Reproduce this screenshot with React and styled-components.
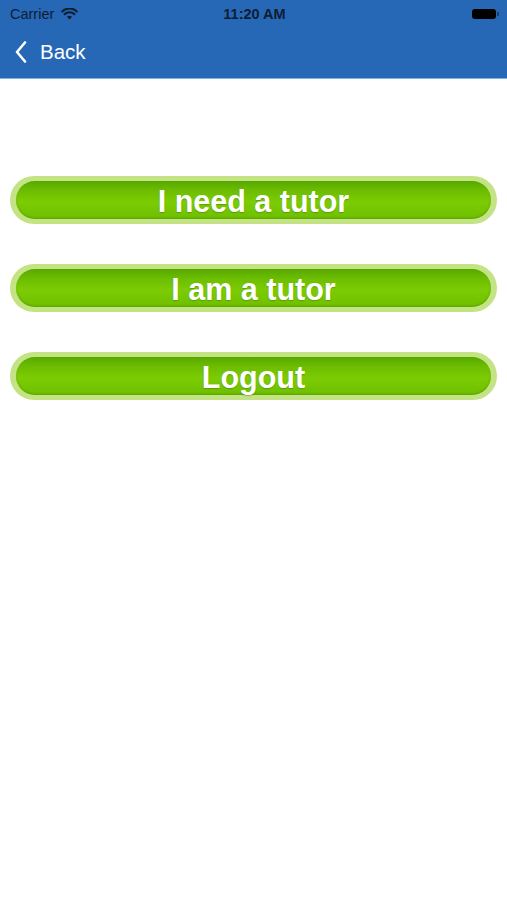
import styled, { createGlobalStyle } from "styled-components";

const GlobalStyle = createGlobalStyle`
  body {
    margin: 0;
    background: #ffffff;
    font-family: "Liberation Sans", Arial, sans-serif;
  }
`;

const Screen = styled.div`
  width: 507px;
  min-height: 900px;
  background: #ffffff;
`;

const Header = styled.header`
  background: #2667b6;
  height: 78px;
  border-bottom: 1px solid #7fb2e6;
  color: #ffffff;
  display: flex;
  flex-direction: column;
`;

const StatusBar = styled.div`
  height: 28px;
  display: grid;
  grid-template-columns: 1fr auto 1fr;
  align-items: center;
  padding: 0 8px 0 10px;
  font-size: 14.5px;
  color: #0f1d33;
`;

const Carrier = styled.div`
  display: flex;
  align-items: center;
  gap: 7px;
`;

const Time = styled.div`
  font-weight: bold;
  font-size: 14.5px;
`;

const Battery = styled.div`
  justify-self: end;
  display: flex;
  align-items: center;
  gap: 1px;
`;

const BatteryBody = styled.div`
  width: 24px;
  height: 10px;
  background: #000000;
  border-radius: 3px;
`;

const BatteryNub = styled.div`
  width: 2px;
  height: 4px;
  background: #1a3d6b;
  border-radius: 0 1px 1px 0;
`;

const NavBar = styled.div`
  flex: 1;
  display: flex;
  align-items: center;
  padding: 0 0 2px 15px;
`;

const BackButton = styled.button`
  display: flex;
  align-items: center;
  gap: 13px;
  background: none;
  border: none;
  padding: 0;
  color: #ffffff;
  font-family: "Liberation Sans", Arial, sans-serif;
  font-size: 20.5px;
`;

const Menu = styled.main`
  display: flex;
  flex-direction: column;
  gap: 40px;
  padding: 97px 10px 0 10px;
`;

const PillButton = styled.button`
  height: 48px;
  width: 100%;
  padding: 5px 6px;
  border: none;
  border-radius: 24px;
  background: #c3e385;
  cursor: pointer;
  display: flex;
`;

const PillInner = styled.span`
  flex: 1;
  border-radius: 19px;
  background: linear-gradient(
    to bottom,
    #58a800 0%,
    #6cbd00 25%,
    #7ccb04 55%,
    #6ebf00 100%
  );
  box-shadow: inset 0 -1px 2px rgba(60, 120, 0, 0.4);
  display: flex;
  align-items: center;
  justify-content: center;
  padding-top: 2px;
  color: #ffffff;
  font-family: "Liberation Sans", Arial, sans-serif;
  font-weight: bold;
  font-size: 30.5px;
  text-shadow: 0 1px 1px rgba(40, 90, 0, 0.35);
`;

const items = ["I need a tutor", "I am a tutor", "Logout"];

const App = () => {
  return (
    <Screen>
      <GlobalStyle />
      <Header>
        <StatusBar>
          <Carrier>
            Carrier
            <svg width="17" height="12" viewBox="0 0 18 13">
              <path d="M9 12.5 L6.3 9.5 A4 4 0 0 1 11.7 9.5 Z" fill="#0f1d33" />
              <path
                d="M3.6 6.8 A7.6 7.6 0 0 1 14.4 6.8"
                stroke="#0f1d33"
                strokeWidth="2.2"
                fill="none"
                strokeLinecap="round"
              />
              <path
                d="M1 3.9 A11.3 11.3 0 0 1 17 3.9"
                stroke="#0f1d33"
                strokeWidth="2.2"
                fill="none"
                strokeLinecap="round"
              />
            </svg>
          </Carrier>
          <Time>11:20 AM</Time>
          <Battery>
            <BatteryBody />
            <BatteryNub />
          </Battery>
        </StatusBar>
        <NavBar>
          <BackButton>
            <svg width="12" height="22" viewBox="0 0 12 22">
              <path
                d="M10 1.5 L2 11 L10 20.5"
                stroke="#ffffff"
                strokeWidth="2.6"
                fill="none"
                strokeLinecap="round"
                strokeLinejoin="round"
              />
            </svg>
            Back
          </BackButton>
        </NavBar>
      </Header>
      <Menu>
        {items.map((label) => (
          <PillButton key={label}>
            <PillInner>{label}</PillInner>
          </PillButton>
        ))}
      </Menu>
    </Screen>
  );
};

export default App;
